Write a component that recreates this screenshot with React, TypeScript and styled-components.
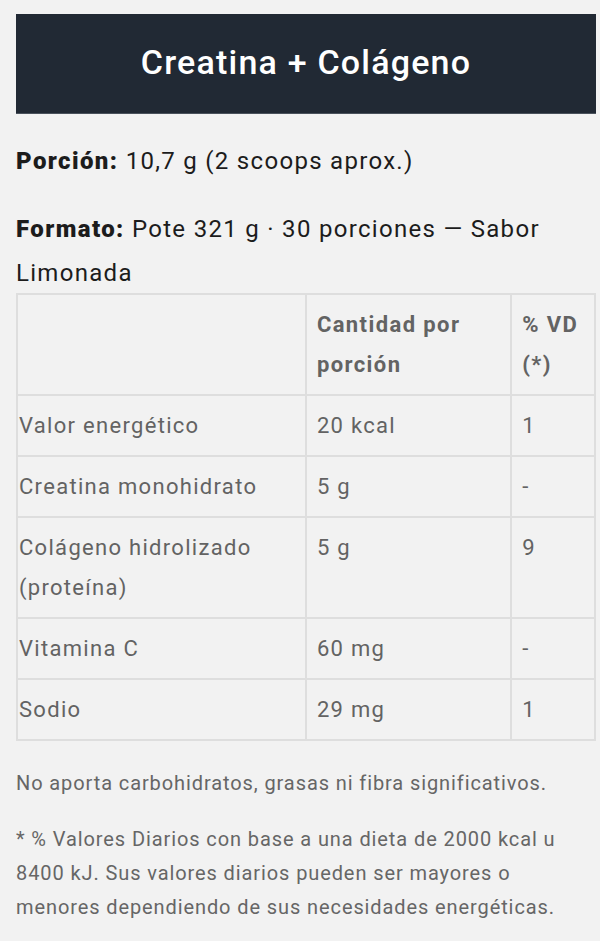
import React from 'react';
import styled, { createGlobalStyle } from 'styled-components';

const GlobalStyle = createGlobalStyle`
    html, body {
        margin: 0;
        padding: 0;
        background: #f2f2f2;
    }
    body {
        font-family: Roboto, 'Noto Sans', sans-serif;
    }
`;

const Page = styled.div`
    width: 580px;
    padding: 14px 0 20px 16px;
`;

const TitleBar = styled.div`
    background: #212934;
    border-bottom: 1px solid #4a525c;
    height: 99px;
    display: flex;
    align-items: center;
    justify-content: center;
`;

const Title = styled.h1`
    margin: 0 0 4px;
    color: #ffffff;
    font-size: 34px;
    font-weight: 500;
    letter-spacing: 1.2px;
`;

const Info = styled.p<{ $top: number }>`
    margin: ${(p) => p.$top}px 0 0;
    font-size: 24px;
    line-height: 44px;
    color: #1c1c1c;
    letter-spacing: 1.3px;
`;

const Label = styled.strong`
    font-weight: 900;
    letter-spacing: 1.4px;
`;

const Table = styled.table`
    width: 580px;
    margin-top: -2px;
    border-collapse: collapse;
    border: 2px solid #dedede;
    color: #636363;
    font-size: 22px;
    letter-spacing: 1.3px;
`;

const Cell = styled.td`
    border: 2px solid #dedede;
    padding: 10px 10px 9px;
    line-height: 40px;
    vertical-align: top;
    text-align: left;

    &:first-child {
        padding-left: 1px;
    }
`;

const HeadCell = styled(Cell).attrs({ as: 'th' })`
    font-weight: 700;
    letter-spacing: 1.4px;
`;

const Note = styled.p<{ $top: number }>`
    margin: ${(p) => p.$top}px 0 0;
    color: #666666;
    font-size: 20px;
    line-height: 34px;
    letter-spacing: 0.9px;
`;

const rows: { name: string; amount: string; vd: string }[] = [
    { name: 'Valor energético', amount: '20 kcal', vd: '1' },
    { name: 'Creatina monohidrato', amount: '5 g', vd: '-' },
    { name: 'Colágeno hidrolizado (proteína)', amount: '5 g', vd: '9' },
    { name: 'Vitamina C', amount: '60 mg', vd: '-' },
    { name: 'Sodio', amount: '29 mg', vd: '1' },
];

export default function App() {
    return (
        <Page>
            <GlobalStyle />
            <TitleBar>
                <Title>Creatina + Colágeno</Title>
            </TitleBar>
            <Info $top={25}>
                <Label>Porción:</Label> 10,7 g (2 scoops aprox.)
            </Info>
            <Info $top={24}>
                <Label>Formato:</Label> Pote 321 g · 30 porciones — Sabor Limonada
            </Info>
            <Table>
                <colgroup>
                    <col style={{ width: 290 }} />
                    <col style={{ width: 206 }} />
                    <col style={{ width: 84 }} />
                </colgroup>
                <thead>
                    <tr>
                        <HeadCell />
                        <HeadCell>Cantidad por porción</HeadCell>
                        <HeadCell>% VD (*)</HeadCell>
                    </tr>
                </thead>
                <tbody>
                    {rows.map((r) => (
                        <tr key={r.name}>
                            <Cell>{r.name}</Cell>
                            <Cell>{r.amount}</Cell>
                            <Cell>{r.vd}</Cell>
                        </tr>
                    ))}
                </tbody>
            </Table>
            <Note $top={25}>No aporta carbohidratos, grasas ni fibra significativos.</Note>
            <Note $top={22}>
                * % Valores Diarios con base a una dieta de 2000 kcal u 8400 kJ. Sus valores diarios pueden ser
                mayores o menores dependiendo de sus necesidades energéticas.
            </Note>
        </Page>
    );
}
